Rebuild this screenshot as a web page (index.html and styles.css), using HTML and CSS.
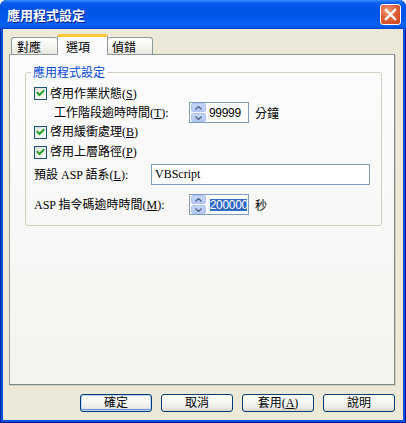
FILE: index.html
```html
<!DOCTYPE html>
<html lang="zh-Hant">
<head>
<meta charset="utf-8">
<title>應用程式設定</title>
<link rel="stylesheet" href="styles.css">
</head>
<body>
<div class="window">
  <div class="titlebar">
    <span class="title">應用程式設定</span>
    <span class="close" aria-label="關閉">
      <svg width="21" height="21" viewBox="0 0 21 21"><path d="M6 6 L15 15 M15 6 L6 15" stroke="#fff" stroke-width="2.4" stroke-linecap="square" fill="none"/></svg>
    </span>
  </div>
  <div class="client">
    <div class="tabs">
      <div class="tab t1">對應</div>
      <div class="tab t2 active">選項</div>
      <div class="tab t3">偵錯</div>
    </div>
    <div class="panel">
      <fieldset class="group">
        <legend>應用程式設定</legend>
        <div class="row ra">
          <span class="cb"><svg width="11" height="11" viewBox="0 0 11 11"><path d="M2.5 4.8 L4.5 7 L8.6 2.8" stroke="#21A121" stroke-width="2" fill="none" stroke-linecap="square"/></svg></span>
          <span class="cb-label">啓用作業狀態(<u>S</u>)</span>
        </div>
        <div class="row rb">
          <span class="lbl lbl-b">工作階段逾時時間(<u>T</u>):</span>
          <span class="spin">
            <span class="spin-btns">
              <span class="sb"><svg width="7" height="4" viewBox="0 0 7 4"><path d="M0.5 3.5 L3.5 0.5 L6.5 3.5" stroke="#4D6185" stroke-width="1.3" fill="none"/></svg></span>
              <span class="sb"><svg width="7" height="4" viewBox="0 0 7 4"><path d="M0.5 0.5 L3.5 3.5 L6.5 0.5" stroke="#4D6185" stroke-width="1.3" fill="none"/></svg></span>
            </span>
            <span class="spin-val">99999</span>
          </span>
          <span class="unit">分鐘</span>
        </div>
        <div class="row rc">
          <span class="cb"><svg width="11" height="11" viewBox="0 0 11 11"><path d="M2.5 4.8 L4.5 7 L8.6 2.8" stroke="#21A121" stroke-width="2" fill="none" stroke-linecap="square"/></svg></span>
          <span class="cb-label">啓用緩衝處理(<u>B</u>)</span>
        </div>
        <div class="row rd">
          <span class="cb"><svg width="11" height="11" viewBox="0 0 11 11"><path d="M2.5 4.8 L4.5 7 L8.6 2.8" stroke="#21A121" stroke-width="2" fill="none" stroke-linecap="square"/></svg></span>
          <span class="cb-label">啓用上層路徑(<u>P</u>)</span>
        </div>
        <div class="row re">
          <span class="lbl lbl-e">預設 ASP 語系(<u>L</u>):</span>
          <span class="textbox">VBScript</span>
        </div>
        <div class="row rf">
          <span class="lbl lbl-f">ASP 指令碼逾時時間(<u>M</u>):</span>
          <span class="spin">
            <span class="spin-btns">
              <span class="sb"><svg width="7" height="4" viewBox="0 0 7 4"><path d="M0.5 3.5 L3.5 0.5 L6.5 3.5" stroke="#4D6185" stroke-width="1.3" fill="none"/></svg></span>
              <span class="sb"><svg width="7" height="4" viewBox="0 0 7 4"><path d="M0.5 0.5 L3.5 3.5 L6.5 0.5" stroke="#4D6185" stroke-width="1.3" fill="none"/></svg></span>
            </span>
            <span class="spin-val sel">200000</span>
          </span>
          <span class="unit">秒</span>
        </div>
      </fieldset>
    </div>
    <div class="buttons">
      <span class="btn default">確定</span>
      <span class="btn">取消</span>
      <span class="btn">套用(<u>A</u>)</span>
      <span class="btn">說明</span>
    </div>
  </div>
</div>
</body>
</html>
```

FILE: styles.css
```css
* { box-sizing: border-box; }
html, body { margin: 0; padding: 0; background: #ffffff; }
body {
  font-family: "Liberation Serif", "Noto Sans CJK TC", serif;
  font-size: 12px;
  color: #000;
}
.window {
  width: 406px;
  height: 423px;
  display: flex;
  flex-direction: column;
  background: #0A50DE;
  border-radius: 7px 7px 0 0;
  box-shadow: inset 1px 0 0 #0024A8, inset -1px 0 0 #00138C, inset 0 -1px 0 #00138C;
  overflow: hidden;
}
.titlebar {
  height: 29px;
  flex: none;
  display: flex;
  align-items: center;
  justify-content: space-between;
  padding: 0 5px 0 7px;
  background: linear-gradient(to bottom, #3A8CFF 0px, #0A5EF0 3px, #0055E8 8px, #0057EA 18px, #0663F6 25px, #0050DC 28px, #003BC8 29px);
}
.title {
  font-family: "Noto Sans CJK TC", sans-serif;
  font-weight: bold;
  font-size: 13px;
  color: #fff;
  text-shadow: 1px 1px 0 #0A1E8C;
  line-height: 15px;
  margin-top: -1px;
}
.close {
  width: 21px;
  height: 21px;
  display: flex;
  border: 1px solid #fff;
  border-radius: 3px;
  background: radial-gradient(circle at 35% 30%, #F09A7A 0%, #E0623A 45%, #C4401C 100%);
  margin-top: -1px;
}
.close svg { margin: -1px; }
.client {
  flex: 1;
  margin: 0 3px 3px 3px;
  background: #ECE9D8;
  padding: 6px 8px 8px 6px;
  display: flex;
  flex-direction: column;
}
.tabs {
  display: flex;
  align-items: flex-end;
  height: 19px;
  padding-left: 2px;
  position: relative;
  z-index: 1;
}
.tab {
  font-family: "Noto Sans CJK TC", sans-serif;
  font-size: 12px;
  line-height: 14px;
  height: 17px;
  border: 1px solid #919B9C;
  border-bottom: none;
  border-radius: 3px 3px 0 0;
  background: linear-gradient(to bottom, #FFFFFF, #F3F3EF 60%, #E6E6DF);
  padding-top: 2px;
}
.t1 { width: 46px; padding-left: 5px; border-right: none; }
.t3 { width: 45px; padding-left: 4px; border-left: none; }
.tab.active {
  width: 51px;
  height: 21px;
  margin-bottom: -1px;
  padding-left: 8px;
  padding-top: 3px;
  background: #FCFCFE;
  border-top: 3px solid #FFC83C;
  box-shadow: inset 0 -18px 0 #FCFCFE;
}
.panel {
  flex: 1;
  border: 1px solid #919B9C;
  border-right-color: #7F8A8C;
  border-bottom-color: #7F8A8C;
  background: linear-gradient(to bottom, #FCFCFE, #F4F3EE);
  padding: 10px 12px 0 15px;
  box-shadow: 1px 1px 0 #D0CEBF;
}
.group {
  margin: 0;
  border: 1px solid #D0D0BF;
  border-radius: 3px;
  padding: 5px 8px 10px 8px;
  min-width: 0;
}
.group legend {
  font-family: "Noto Sans CJK TC", sans-serif;
  color: #0046D5;
  font-size: 12px;
  line-height: 14px;
  padding: 0 2px;
  margin-left: -3px;
}
.row {
  display: flex;
  align-items: center;
  font-family: "Liberation Serif", "Noto Sans CJK TC", serif;
  white-space: nowrap;
}
.ra { height: 19px; }
.rb { height: 19px; }
.rc { height: 20px; }
.rd { height: 20px; }
.re { height: 25px; }
.rf { height: 21px; margin-top: 7px; }
.cb {
  width: 13px;
  height: 13px;
  flex: none;
  border: 1px solid #1C5180;
  background: linear-gradient(135deg, #DCDCD7 0%, #F4F4F0 60%, #FFFFFF 100%);
  display: flex;
  align-items: center;
  justify-content: center;
  margin-right: 3px;
}
.cb-label, .lbl, .unit { line-height: 14px; }
.lbl-b { margin-left: 20px; width: 135px; }
.lbl-e { width: 117px; }
.lbl-f { width: 155px; }
.spin {
  width: 60px;
  height: 21px;
  border: 1px solid #7F9DB9;
  background: #fff;
  display: flex;
  align-items: center;
  padding: 1px;
  flex: none;
}
.spin-btns {
  width: 15px;
  height: 19px;
  display: flex;
  flex-direction: column;
  gap: 1px;
}
.sb {
  flex: 1;
  display: flex;
  align-items: center;
  justify-content: center;
  border-radius: 2px;
  background: linear-gradient(to bottom, #C6D6FA, #B4C8F6);
  border: 1px solid #B0C4F0;
}
.spin-val {
  font-family: "Liberation Sans", "DejaVu Sans", sans-serif;
  font-size: 12px;
  line-height: 12px;
  margin-left: 3px;
  letter-spacing: -0.3px;
}
.spin-val.sel {
  background: #316AC5;
  color: #fff;
  margin-left: 4px;
  padding: 0;
  width: 38px;
  overflow: hidden;
}
.unit { margin-left: 6px; font-family: "Noto Sans CJK TC", sans-serif; }
.textbox {
  width: 219px;
  height: 21px;
  border: 1px solid #7F9DB9;
  background: #fff;
  padding-left: 3px;
  line-height: 19px;
  font-family: "Liberation Serif", serif;
}
.buttons {
  display: flex;
  justify-content: flex-end;
  gap: 9px;
  margin-top: 9px;
  height: 18px;
}
.btn {
  width: 72px;
  height: 18px;
  border: 1px solid #003C74;
  border-radius: 3px;
  background: linear-gradient(to bottom, #FFFFFF 0%, #F7F7F4 40%, #ECEBE6 80%, #D6D0C5 100%);
  display: flex;
  align-items: center;
  justify-content: center;
  line-height: 14px;
  font-family: "Liberation Serif", "Noto Sans CJK TC", serif;
}
.btn.default {
  box-shadow: inset 0 0 0 1px #B9D1F7, inset 0 -1px 0 1px #6A94DD;
}
```
